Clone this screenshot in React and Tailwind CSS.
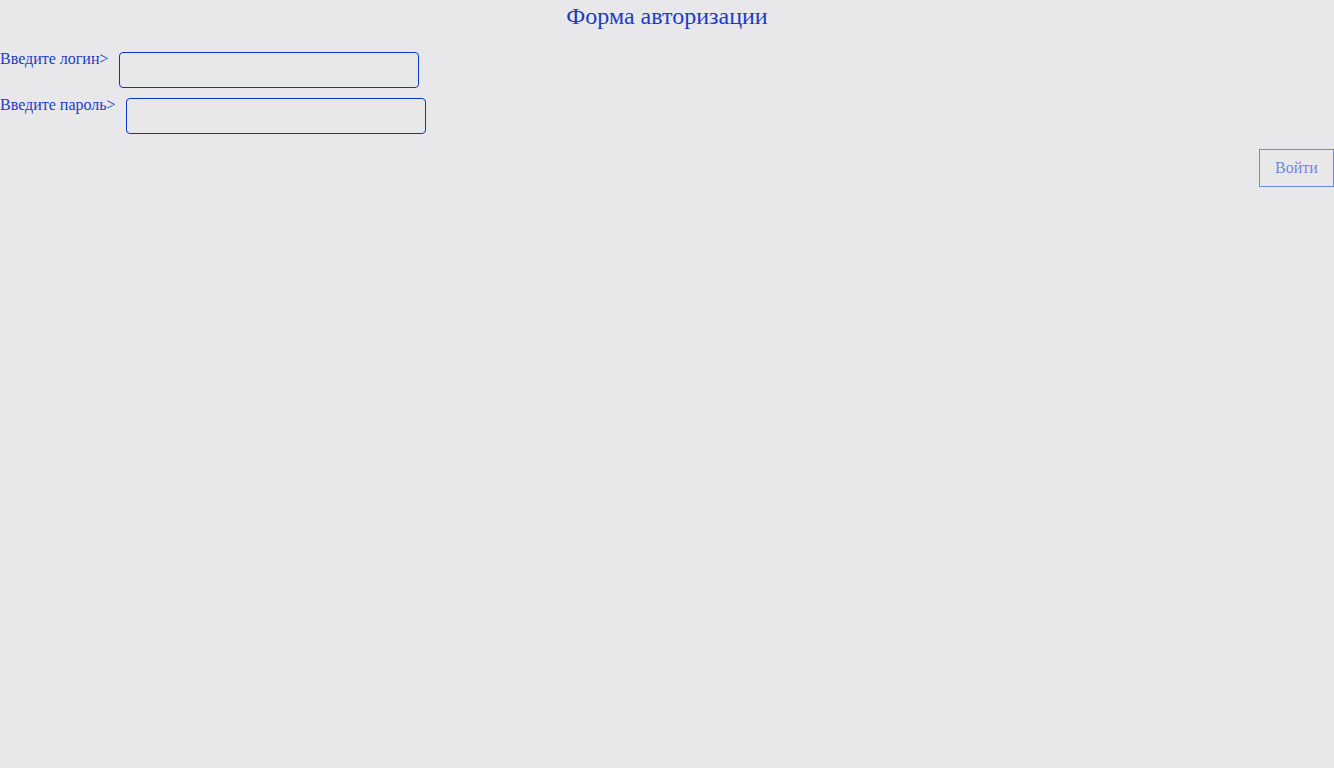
export default function App() {
  return (
    <div className="min-h-screen w-full bg-[#e8e8eb] text-[#1a3cc8] [font-family:'Liberation_Serif',serif]">
      <h1 className="text-center text-[24px] leading-[32px]">Форма авторизации</h1>
      <div className="mt-4 flex items-start">
        <label className="text-[16px] leading-[22px]">Введите логин&gt;</label>
        <input className="mt-1 ml-[10px] h-9 w-[300px] rounded-[4px] border border-[#0a36cc] bg-transparent outline-none" />
      </div>
      <div className="mt-[6px] flex items-start">
        <label className="text-[16px] leading-[22px]">Введите пароль&gt;</label>
        <input type="password" className="mt-1 ml-[10px] h-9 w-[300px] rounded-[4px] border border-[#0a36cc] bg-transparent outline-none" />
      </div>
      <div className="mt-[15px] flex justify-end">
        <button className="h-[38px] w-[75px] border border-[#7088e0] text-[16px] text-[#7088e0]">Войти</button>
      </div>
    </div>
  );
}
